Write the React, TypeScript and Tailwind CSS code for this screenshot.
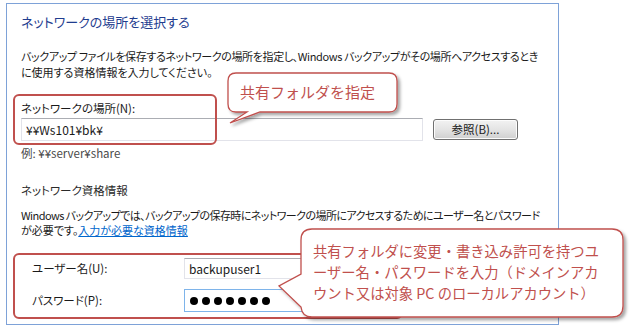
import React from 'react';

const RED = '#c0504d';

// callout shape with a tail; text sits on top as real text
const Callout = ({ d, w, h }: { d: string; w: number; h: number }) => (
  <svg width={w} height={h} className="absolute left-0 top-0 overflow-visible">
    <defs>
      <filter id="sh" x="-10%" y="-10%" width="130%" height="140%">
        <feDropShadow dx="2.5" dy="2.5" stdDeviation="1.6" floodColor="#000" floodOpacity="0.35" />
      </filter>
    </defs>
    <path d={d} fill="#fff" stroke={RED} strokeWidth="1.3" filter="url(#sh)" />
  </svg>
);

const Dots = () => (
  <div className="flex items-center gap-[4px] pl-[5px]">
    {Array.from({ length: 7 }).map((_, i) => (
      <div key={i} className="w-[8px] h-[8px] rounded-full bg-black" />
    ))}
  </div>
);

export default function App() {
  return (
    <div className="relative w-[631px] h-[335px] bg-white overflow-hidden font-['Noto_Sans_CJK_JP','Noto_Sans',sans-serif] text-[#1a1a1a] [font-feature-settings:'palt']">
      <div className="ml-[6px] mt-[3px] w-[553px] h-[322px] border border-[#7ea2d8] pl-[14px] pt-[10px]">
        <div className="text-[13px] leading-[16px] text-[#1f3d8f]">ネットワークの場所を選択する</div>

        <div className="mt-[18px] text-[11px] leading-[16px] whitespace-nowrap">
          <div className="tracking-[-0.38px]">バックアップ ファイルを保存するネットワークの場所を指定し、Windows バックアップがその場所へアクセスするとき</div>
          <div>に使用する資格情報を入力してください。</div>
        </div>

        <div className="mt-[20px] text-[11.5px] leading-[16px]">ネットワークの場所(N):</div>
        <div className="mt-[2px] flex items-center gap-[10px]">
          <div className="w-[402px] h-[23px] border border-[#e2e3ea] border-t-[#abadb3] flex items-center pl-[4px] text-[12px]">
            ¥¥Ws101¥bk¥
          </div>
          <button className="w-[85px] h-[21px] rounded-[3px] border border-[#707070] bg-gradient-to-b from-[#f2f2f2] via-[#e4e4e4] to-[#cfcfcf] text-[11.5px] leading-none text-[#1a1a1a] shadow-[inset_0_0_0_1px_#fcfcfc]">
            参照(B)...
          </button>
        </div>
        <div className="mt-[4px] text-[11.5px] leading-[16px] text-[#4a4a4a]">例: ¥¥server¥share</div>

        <div className="mt-[21px] text-[11.5px] leading-[16px] text-[#2a2a2a]">ネットワーク資格情報</div>
        <div className="mt-[10px] text-[11px] leading-[15px] whitespace-nowrap">
          <div className="tracking-[-0.58px]">Windows バックアップでは、バックアップの保存時にネットワークの場所にアクセスするためにユーザー名とパスワード</div>
          <div>
            が必要です。<span className="text-[#0066cc] underline">入力が必要な資格情報</span>
          </div>
        </div>

        <div className="mt-[20px] flex items-center pl-[11px] text-[11.5px]">
          <div className="w-[152px]">ユーザー名(U):</div>
          <div className="w-[240px] h-[21px] border border-[#e2e3ea] border-t-[#abadb3] flex items-center pl-[4px] text-[12px]">
            backupuser1
          </div>
        </div>
        <div className="mt-[10px] flex items-center pl-[11px] text-[11.5px]">
          <div className="w-[152px]">パスワード(P):</div>
          <div className="w-[240px] h-[23px] border border-[#7eb4ea] flex items-center">
            <Dots />
          </div>
        </div>
      </div>

      {/* annotation frames */}
      <div className="absolute left-[13px] top-[94px] w-[204px] h-[51px] rounded-[6px] border-2 border-[#c0504d]" />
      <div className="absolute left-[13px] top-[253px] w-[390px] h-[66px] rounded-[6px] border-2 border-[#c0504d]" />

      {/* callout 1 */}
      <div className="absolute left-0 top-0">
        <Callout
          w={631}
          h={335}
          d="M236 73 H389 Q397 73 397 81 V104 Q397 112 389 112 H260 L230 123 L247 112 H236 Q228 112 228 104 V81 Q228 73 236 73 Z"
        />
      </div>
      <div className="absolute left-[240px] top-[82px] text-[15px] leading-[20px] text-[#c0504d] [font-feature-settings:normal]">
        共有フォルダを指定
      </div>

      {/* callout 2 */}
      <div className="absolute left-0 top-0">
        <Callout
          w={631}
          h={335}
          d="M312 229 H612 Q623 229 623 240 V306 Q623 317 612 317 H312 Q302 317 301 307 L279 286 L301 274 V240 Q301 229 312 229 Z"
        />
      </div>
      <div className="absolute left-[313px] top-[240px] text-[14.3px] leading-[21px] text-[#c0504d] whitespace-nowrap [font-feature-settings:normal]">
        <div>共有フォルダに変更・書き込み許可を持つユ</div>
        <div>ーザー名・パスワードを入力（ドメインアカ</div>
        <div>ウント又は対象 PC のローカルアカウント）</div>
      </div>
    </div>
  );
}
